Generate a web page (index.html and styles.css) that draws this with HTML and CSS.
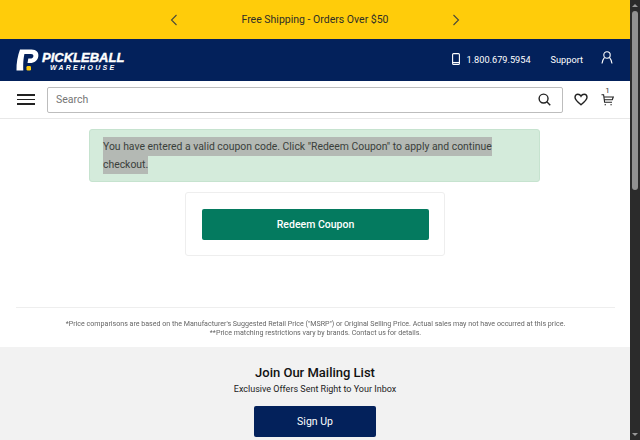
FILE: index.html
```html
<!DOCTYPE html>
<html lang="en">
<head>
  <meta charset="UTF-8">
  <title>Pickleball Warehouse</title>
  <link rel="stylesheet" href="styles.css">
</head>
<body>
  <div class="page">
    <div class="promo-bar">
      <svg class="promo-arrow" width="10" height="14" viewBox="0 0 10 14"><path d="M7.5 2 2.5 7 7.5 12"/></svg>
      <span class="promo-text">Free Shipping - Orders Over $50</span>
      <svg class="promo-arrow" width="10" height="14" viewBox="0 0 10 14"><path d="M2.5 2 7.5 7 2.5 12"/></svg>
    </div>

    <header class="top-bar">
      <a class="logo" href="#">
        <svg class="logo-mark" width="24" height="22" viewBox="0 0 24 22">
          <path class="logo-p" d="M4 0.5H15.5C20.5 0.5 23 3.5 22.3 7.5C21.6 11.5 18.5 14 14 14H11.5L12.3 9.5H14C16 9.5 17.2 8.7 17.4 7.2C17.6 5.8 16.6 5 15 5H8.4C7.5 9.5 7 14 7.3 21.5H0.5C0.2 14 1.8 6.5 4 0.5Z"/>
          <rect class="logo-dot" x="10.5" y="17" width="4.5" height="4.5" rx="1.2"/>
        </svg>
        <span class="logo-words">
          <span class="logo-top">PICKLEBALL</span>
          <span class="logo-bottom">WAREHOUSE</span>
        </span>
      </a>
      <div class="top-links">
        <a class="phone" href="#">
          <svg width="8" height="12" viewBox="0 0 8 12"><rect x="0.6" y="0.6" width="6.8" height="10.8" rx="1"/><path d="M0.6 9.5h6.8"/></svg>
          1.800.679.5954
        </a>
        <a class="support" href="#">Support</a>
        <svg class="user-icon" width="12" height="13" viewBox="0 0 12 13"><circle cx="6" cy="4" r="3.2"/><path d="M1 12.5C1.3 10 2 8.2 3.4 6.6M11 12.5C10.7 10 10 8.2 8.6 6.6"/></svg>
      </div>
    </header>

    <div class="search-row">
      <div class="burger"><span></span><span></span><span></span></div>
      <div class="search-box">
        <span class="search-label">Search</span>
        <svg width="13" height="13" viewBox="0 0 14 14"><circle cx="6" cy="6" r="4.8"/><path d="M9.5 9.5 13.2 13.2"/></svg>
      </div>
      <svg class="heart" width="14" height="13" viewBox="0 0 14 13"><path d="M7 11.8C3.5 9 1 6.9 1 4.3 1 2.5 2.3 1.2 3.9 1.2 5.2 1.2 6.3 1.9 7 3.2 7.7 1.9 8.8 1.2 10.1 1.2 11.7 1.2 13 2.5 13 4.3 13 6.9 10.5 9 7 11.8Z"/></svg>
      <div class="cart">
        <span class="cart-count">1</span>
        <svg width="13" height="12" viewBox="0 0 13 12"><path d="M0.5 0.8H2.6L3.6 8.2H11M3 3H12.3L11.3 5.8H3.4M3.6 10.8H5M9.4 10.8H10.8"/></svg>
      </div>
    </div>

    <main class="content">
      <div class="alert"><span class="selected">You have entered a valid coupon code. Click "Redeem Coupon" to apply and continue checkout.</span></div>
      <div class="redeem-card">
        <a class="redeem-btn" href="#">Redeem Coupon</a>
      </div>
      <div class="disclaimer">
        <p>*Price comparisons are based on the Manufacturer's Suggested Retail Price ("MSRP") or Original Selling Price. Actual sales may not have occurred at this price.</p>
        <p>**Price matching restrictions vary by brands. Contact us for details.</p>
      </div>
    </main>

    <section class="mailing">
      <h2>Join Our Mailing List</h2>
      <p>Exclusive Offers Sent Right to Your Inbox</p>
      <a class="signup-btn" href="#">Sign Up</a>
    </section>
  </div>

  <div class="scrollbar">
    <div class="scroll-up"></div>
    <div class="scroll-thumb"></div>
    <div class="scroll-down"></div>
  </div>
</body>
</html>
```

FILE: styles.css
```css
body, html {
  margin: 0;
  padding: 0;
  height: 440px;
  overflow: hidden;
  font-family: Roboto, sans-serif;
  background-color: #fff;
}
body {
  display: flex;
}
a {
  text-decoration: none;
  color: inherit;
}
.page {
  width: 630px;
  flex-shrink: 0;
  overflow: hidden;
}
.promo-bar {
  display: flex;
  justify-content: center;
  align-items: center;
  gap: 62px;
  height: 39px;
  background-color: #ffcc0a;
  color: #2e2e28;
  font-size: 10.5px;
}
.promo-arrow {
  fill: none;
  stroke: #4a4a3a;
  stroke-width: 1.1;
}
.top-bar {
  display: flex;
  justify-content: space-between;
  align-items: center;
  height: 42px;
  padding: 0 17px 0 16px;
  background-color: #03215b;
  color: #fff;
}
.logo {
  display: flex;
  align-items: center;
  gap: 2px;
}
.logo-p {
  fill: #fff;
}
.logo-dot {
  fill: #ffcc0a;
}
.logo-words {
  display: flex;
  flex-direction: column;
  align-items: center;
  margin-top: 3px;
}
.logo-top {
  font-family: "Liberation Sans", sans-serif;
  font-size: 13px;
  line-height: 13px;
  font-weight: 700;
  font-style: italic;
  -webkit-text-stroke: 0.4px #fff;
}
.logo-bottom {
  font-family: "Liberation Sans", sans-serif;
  font-size: 7px;
  line-height: 8px;
  font-weight: 700;
  font-style: italic;
  letter-spacing: 2.3px;
}
.top-links {
  display: flex;
  align-items: center;
  margin-bottom: 2px;
  font-size: 9.2px;
}
.phone {
  display: flex;
  align-items: center;
  gap: 7px;
}
.phone svg {
  fill: none;
  stroke: #fff;
  stroke-width: 1.1;
}
.support {
  margin-left: 20px;
}
.user-icon {
  margin-left: 18px;
  margin-top: -3px;
  fill: none;
  stroke: #fff;
  stroke-width: 1.1;
}
.search-row {
  display: flex;
  align-items: center;
  height: 37px;
  padding: 0 16px 0 17px;
  border-bottom: 1px solid #e8e8e8;
}
.burger {
  display: flex;
  flex-direction: column;
  gap: 3px;
  width: 18px;
}
.burger span {
  height: 1.5px;
  background-color: #222;
}
.search-box {
  display: flex;
  justify-content: space-between;
  align-items: center;
  flex: 1;
  box-sizing: border-box;
  height: 26px;
  margin-left: 12px;
  padding: 0 11px 0 8px;
  border: 1px solid #bdbdbd;
  border-radius: 2px;
}
.search-label {
  font-size: 10.5px;
  color: #757575;
}
.search-box svg {
  fill: none;
  stroke: #222;
  stroke-width: 1.5;
}
.heart {
  margin-left: 11px;
  fill: none;
  stroke: #222;
  stroke-width: 1.4;
}
.cart {
  display: flex;
  flex-direction: column;
  align-items: center;
  margin-left: 13px;
  margin-top: -7px;
}
.cart-count {
  font-size: 8px;
  line-height: 7px;
  color: #333;
}
.cart svg {
  fill: none;
  stroke: #222;
  stroke-width: 1.1;
}
.content {
  padding: 10px 15px 0 16px;
}
.alert {
  box-sizing: border-box;
  width: 451px;
  height: 53px;
  margin-left: 73px;
  padding: 8px 13px;
  background-color: #d4ebdb;
  border: 1px solid #c6e3cf;
  border-radius: 3px;
  font-size: 10.4px;
  line-height: 18px;
  color: #3a3f3b;
}
.selected {
  padding: 3px 0;
  background-color: #b4b9b4;
}
.redeem-card {
  box-sizing: border-box;
  width: 260px;
  height: 64px;
  margin: 10px 0 0 169px;
  padding: 16px 15px 16px 16px;
  border: 1px solid #eee;
  border-radius: 3px;
}
.redeem-btn {
  display: flex;
  justify-content: center;
  align-items: center;
  height: 31px;
  background-color: #047a5f;
  border-radius: 2px;
  color: #fff;
  font-size: 10.5px;
  font-weight: 500;
}
.disclaimer {
  margin-top: 51px;
  padding-top: 11px;
  border-top: 1px solid #eee;
  text-align: center;
  font-size: 7.1px;
  line-height: 9px;
  color: #666;
  will-change: opacity;
}
.disclaimer p {
  margin: 0;
}
.mailing {
  margin-top: 10px;
  padding-top: 17px;
  height: 100px;
  background-color: #f2f2f2;
  text-align: center;
}
.mailing h2 {
  margin: 0;
  font-size: 13px;
  line-height: 18px;
  font-weight: 500;
  color: #111;
}
.mailing p {
  margin: 0;
  font-size: 9px;
  line-height: 14px;
  color: #222;
}
.signup-btn {
  display: flex;
  justify-content: center;
  align-items: center;
  width: 122px;
  height: 31px;
  margin: 10px auto 0;
  background-color: #03215b;
  border-radius: 2px;
  color: #fff;
  font-size: 10.5px;
}
.scrollbar {
  display: flex;
  flex-direction: column;
  align-items: center;
  flex: 1;
  height: 440px;
  background-color: #2b2b2b;
}
.scroll-up,
.scroll-down {
  width: 0;
  height: 0;
  margin: 4px 0;
  border-left: 3px solid transparent;
  border-right: 3px solid transparent;
}
.scroll-up {
  border-bottom: 3px solid #999;
}
.scroll-down {
  margin-top: auto;
  border-top: 3px solid #999;
}
.scroll-thumb {
  width: 6px;
  height: 179px;
  background-color: #919191;
  border-radius: 3px;
}
```
